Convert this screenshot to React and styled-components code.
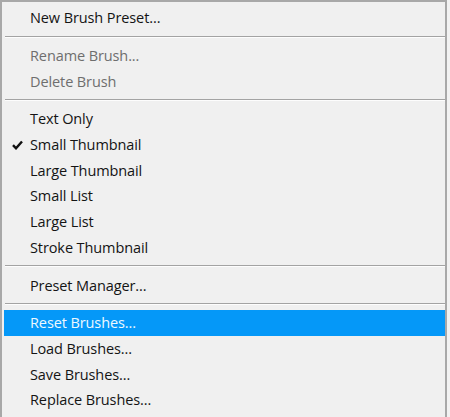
import React from "react";
import styled, { createGlobalStyle } from "styled-components";

const Global = createGlobalStyle`
  html, body { margin: 0; padding: 0; background: #f2f2f2; }
  body { width: 450px; height: 417px; overflow: hidden; }
`;

const Menu = styled.div`
  box-sizing: border-box;
  width: 447px;
  height: 417px;
  background: #f0f0f0;
  border-top: 2px solid #a8a8a8;
  border-left: 2px solid #a8a8a8;
  border-right: 2px solid #a8a8a8;
  padding: 3px 0 0 2px;
  font-family: "Open Sans", "Noto Sans", sans-serif;
  font-size: 14.5px;
`;

const Item = styled.div`
  position: relative;
  height: 25.7px;
  display: flex;
  align-items: center;
  padding-left: 26px;
  color: ${(p) => (p.$active ? "#eef8ff" : p.$disabled ? "#6e6e6e" : "#141414")};
  background: ${(p) => (p.$active ? "#0598f8" : "transparent")};
  letter-spacing: -0.1px;
`;

const Check = styled.svg`
  position: absolute;
  left: 8px;
  top: 8px;
  width: 11px;
  height: 10px;
`;

const Separator = styled.div`
  height: 12px;
  display: flex;
  align-items: center;
  padding-left: 1px;
  &::after {
    content: "";
    flex: 1;
    height: 1px;
    background: #a3a3a3;
    border-bottom: 1px solid #fdfdfd;
  }
`;

const groups = [
  [{ t: "New Brush Preset..." }],
  [
    { t: "Rename Brush...", d: true },
    { t: "Delete Brush", d: true },
  ],
  [
    { t: "Text Only" },
    { t: "Small Thumbnail", c: true },
    { t: "Large Thumbnail" },
    { t: "Small List" },
    { t: "Large List" },
    { t: "Stroke Thumbnail" },
  ],
  [{ t: "Preset Manager..." }],
  [
    { t: "Reset Brushes...", a: true },
    { t: "Load Brushes..." },
    { t: "Save Brushes..." },
    { t: "Replace Brushes..." },
  ],
];

export default function App() {
  return (
    <>
      <Global />
      <Menu>
        {groups.map((g, gi) => (
          <React.Fragment key={gi}>
            {gi > 0 && <Separator />}
            {g.map((it) => (
              <Item key={it.t} $disabled={it.d} $active={it.a}>
                {it.c && (
                  <Check viewBox="0 0 11 10">
                    <path d="M1 5.2 L4 8.3 L10 1.5" fill="none" stroke="#111" strokeWidth="2.4" />
                  </Check>
                )}
                {it.t}
              </Item>
            ))}
          </React.Fragment>
        ))}
      </Menu>
    </>
  );
}
